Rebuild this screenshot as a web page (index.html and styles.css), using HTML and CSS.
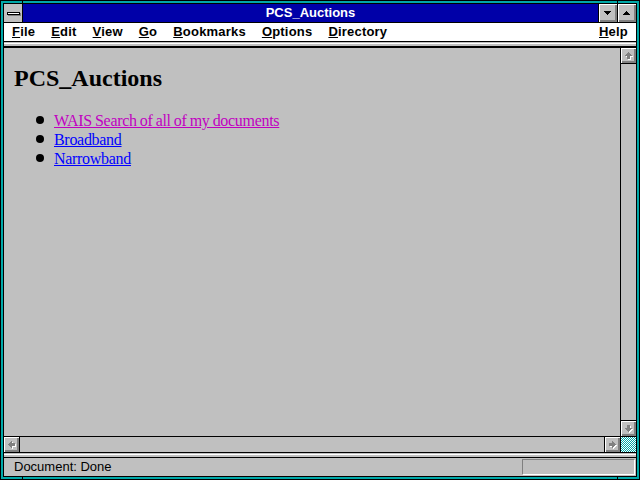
FILE: index.html
```html
<!DOCTYPE html>
<html>
<head>
<meta charset="utf-8">
<title>PCS_Auctions</title>
<link rel="stylesheet" href="styles.css">
</head>
<body>
<div class="frame">
  <div class="win">
    <div class="titlebar">
      <div class="sysbox"><div class="sysbar"></div></div>
      <div class="title">PCS_Auctions</div>
      <div class="tbtn">
        <svg class="tri" width="7" height="4" viewBox="0 0 7 4" shape-rendering="crispEdges"><path d="M0 0h7v1h-1v1h-1v1h-1v1h-1v-1h-1v-1h-1v-1h-1z" fill="#000"/></svg>
      </div>
      <div class="tbtn">
        <svg class="tri" width="7" height="4" viewBox="0 0 7 4" shape-rendering="crispEdges"><path d="M3 0h1v1h1v1h1v1h1v1h-7v-1h1v-1h1v-1h1z" fill="#000"/></svg>
      </div>
    </div>
    <div class="menubar">
      <span class="mi"><span class="k">F</span>ile</span>
      <span class="mi"><span class="k">E</span>dit</span>
      <span class="mi"><span class="k">V</span>iew</span>
      <span class="mi"><span class="k">G</span>o</span>
      <span class="mi"><span class="k">B</span>ookmarks</span>
      <span class="mi"><span class="k">O</span>ptions</span>
      <span class="mi"><span class="k">D</span>irectory</span>
      <span class="mi help"><span class="k">H</span>elp</span>
    </div>
    <div class="band"></div>
    <div class="main">
      <div class="viewport">
        <h1>PCS_Auctions</h1>
        <ul>
          <li><a class="visited" href="#">WAIS Search of all of my documents</a></li>
          <li><a href="#">Broadband</a></li>
          <li><a href="#">Narrowband</a></li>
        </ul>
      </div>
      <div class="vscroll">
        <div class="sbtn sb-top">
          <svg width="10" height="10" viewBox="0 0 10 10" shape-rendering="crispEdges">
            <g transform="translate(1 1)"><path d="M4 1h1v1h1v1h1v1h1v1h-2v3h-3v-3h-2v-1h1v-1h1v-1h1z" fill="#fff"/></g>
            <path d="M4 1h1v1h1v1h1v1h1v1h-2v3h-3v-3h-2v-1h1v-1h1v-1h1z" fill="#808080"/>
          </svg>
        </div>
        <div class="track"></div>
        <div class="sbtn sb-bottom">
          <svg width="10" height="10" viewBox="0 0 10 10" shape-rendering="crispEdges">
            <g transform="translate(1 1)"><g transform="rotate(180 4.5 4.5)"><path d="M4 1h1v1h1v1h1v1h1v1h-2v3h-3v-3h-2v-1h1v-1h1v-1h1z" fill="#fff"/></g></g>
            <g transform="rotate(180 4.5 4.5)"><path d="M4 1h1v1h1v1h1v1h1v1h-2v3h-3v-3h-2v-1h1v-1h1v-1h1z" fill="#808080"/></g>
          </svg>
        </div>
      </div>
    </div>
    <div class="hscroll">
      <div class="sbtn sb-left">
        <svg width="10" height="10" viewBox="0 0 10 10" shape-rendering="crispEdges">
          <g transform="translate(1 1)"><g transform="rotate(-90 4.5 4.5)"><path d="M4 1h1v1h1v1h1v1h1v1h-2v3h-3v-3h-2v-1h1v-1h1v-1h1z" fill="#fff"/></g></g>
          <g transform="rotate(-90 4.5 4.5)"><path d="M4 1h1v1h1v1h1v1h1v1h-2v3h-3v-3h-2v-1h1v-1h1v-1h1z" fill="#808080"/></g>
        </svg>
      </div>
      <div class="track"></div>
      <div class="sbtn sb-right">
        <svg width="10" height="10" viewBox="0 0 10 10" shape-rendering="crispEdges">
          <g transform="translate(1 1)"><g transform="rotate(90 4.5 4.5)"><path d="M4 1h1v1h1v1h1v1h1v1h-2v3h-3v-3h-2v-1h1v-1h1v-1h1z" fill="#fff"/></g></g>
          <g transform="rotate(90 4.5 4.5)"><path d="M4 1h1v1h1v1h1v1h1v1h-2v3h-3v-3h-2v-1h1v-1h1v-1h1z" fill="#808080"/></g>
        </svg>
      </div>
      <div class="corner"></div>
    </div>
    <div class="band band-low"></div>
    <div class="status">
      <span class="stext">Document: Done</span>
      <div class="sbox"></div>
    </div>
  </div>
</div>
</body>
</html>
```

FILE: styles.css
```css
html, body {
  margin: 0;
  padding: 0;
  width: 640px;
  height: 480px;
  overflow: hidden;
  background: #c0c0c0;
}

.frame {
  box-sizing: border-box;
  width: 640px;
  height: 480px;
  border: 1px solid #000;
  padding: 2px;
  background: linear-gradient(90deg, #00a8a8 0 21px, #000 21px 22px, #00a8a8 22px 616px, #000 616px 617px, #00a8a8 617px);
}

.win {
  box-sizing: border-box;
  height: 100%;
  border: 1px solid #000;
  background: #c0c0c0;
  display: flex;
  flex-direction: column;
}

/* Title bar */
.titlebar {
  height: 18px;
  flex: none;
  display: flex;
  background: #0000a8;
  border-bottom: 1px solid #000;
}

.sysbox {
  width: 18px;
  background: #c0c0c0;
  border-right: 1px solid #000;
  display: flex;
  align-items: center;
  justify-content: center;
}

.sysbar {
  width: 11px;
  height: 1px;
  border: 1px solid #000;
  background: #fff;
  box-shadow: 1px 1px 0 #808080;
}

.title {
  flex: 1;
  color: #fff;
  font: bold 13px/18px "Liberation Sans", Arial, sans-serif;
  text-align: center;
  white-space: nowrap;
}

.tbtn {
  width: 18px;
  border-left: 1px solid #000;
  background: #c0c0c0;
  box-shadow: inset 1px 1px 0 #fff, inset -1px -1px 0 #808080, inset -2px -2px 0 #808080;
  display: flex;
  align-items: center;
  justify-content: center;
}

.tri {
  display: block;
  margin: 0 1px 1px 0;
}

/* Menu bar */
.menubar {
  height: 18px;
  flex: none;
  display: flex;
  background: #fff;
  border-bottom: 1px solid #000;
  font: bold 13px/18px "Liberation Sans", Arial, sans-serif;
  letter-spacing: 0.2px;
  color: #000;
}

.mi {
  padding: 0 8px;
  white-space: nowrap;
}

.help {
  margin-left: auto;
}

.k {
  text-decoration: underline;
}

/* separator bands */
.band {
  height: 4px;
  flex: none;
  background: linear-gradient(#c0c0c0 0 1px, #fff 1px 2px, #c0c0c0 2px);
  border-bottom: 2px solid #000;
}

.band-low {
  border-bottom-width: 1px;
}

/* Main document area */
.main {
  flex: 1;
  display: flex;
  min-height: 0;
}

.viewport {
  flex: 1;
  overflow: hidden;
  background: #c0c0c0;
  padding: 0 10px;
  font-family: "Liberation Serif", "Times New Roman", serif;
  color: #000;
}

h1 {
  font-size: 24px;
  line-height: 28px;
  font-weight: bold;
  margin: 16px 0 0;
}

ul {
  list-style: none;
  margin: 19px 0 0;
  padding-left: 40px;
}

li {
  font-size: 16px;
  line-height: 19px;
  letter-spacing: -0.3px;
  word-spacing: -0.6px;
}

li::before {
  content: "";
  display: inline-block;
  width: 8px;
  height: 8px;
  border-radius: 50%;
  background: #000;
  margin: 0 10px 2px -18px;
  vertical-align: baseline;
}

a {
  color: #0000ff;
  text-decoration: underline;
}

a.visited {
  color: #c000c0;
}

/* Scrollbars */
.vscroll {
  width: 15px;
  flex: none;
  border-left: 1px solid #000;
  display: flex;
  flex-direction: column;
}

.track {
  flex: 1;
  background: #c0c0c0;
}

.sbtn {
  width: 15px;
  height: 15px;
  flex: none;
  background: #c0c0c0;
  box-shadow: inset 1px 1px 0 #fff, inset -1px -1px 0 #808080, inset -2px -2px 0 #808080;
  display: flex;
  align-items: center;
  justify-content: center;
}

.sbtn svg {
  display: block;
  margin: 1px 0 0 1px;
}

.sb-top {
  border-bottom: 1px solid #000;
}

.sb-bottom {
  border-top: 1px solid #000;
}

.hscroll {
  height: 15px;
  flex: none;
  display: flex;
  border-top: 1px solid #000;
  border-bottom: 1px solid #000;
}

.sb-left {
  border-right: 1px solid #000;
}

.sb-right {
  border-left: 1px solid #000;
}

.corner {
  width: 15px;
  flex: none;
  border-left: 1px solid #000;
  background: repeating-conic-gradient(#00a8a8 0 25%, #fff 0 50%) 0 0 / 2px 2px;
}

/* Status bar */
.status {
  height: 18px;
  flex: none;
  display: flex;
  align-items: flex-start;
  font: 13px/16px "Liberation Sans", Arial, sans-serif;
  color: #000;
}

.stext {
  padding: 1px 0 0 10px;
}

.sbox {
  margin: 1px 1px 0 auto;
  width: 111px;
  height: 14px;
  border: 1px solid;
  border-color: #808080 #fff #fff #808080;
}
```
